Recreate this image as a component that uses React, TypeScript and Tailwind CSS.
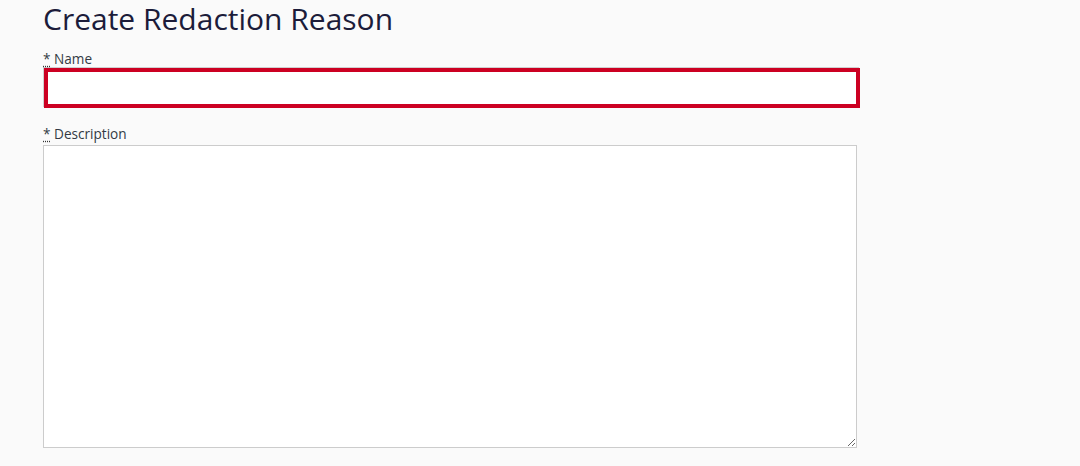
import React from "react";

export default function App() {
  return (
    <div className="min-h-[466px] w-full bg-[#fafafa] pl-[43px]" style={{ fontFamily: '"Open Sans", sans-serif' }}>
      <h1 className="pt-0 text-[30px] leading-[38px] font-normal text-[#1c1c3a]">Create Redaction Reason</h1>
      <div className="mt-[11px] w-[814px]">
        <label className="block text-[13.6px] leading-[20px] text-[#333a44]">
          <abbr title="required" className="underline decoration-dotted decoration-[#333] underline-offset-2">*</abbr> Name
        </label>
        <input
          type="text"
          className="mt-[-1px] ml-px box-border block h-[40px] w-[816px] border-4 border-[#cc0022] bg-white shadow-[-1px_-1px_0_#cfcfcf] outline-none"
        />
      </div>
      <div className="mt-[16px] w-[814px]">
        <label className="block text-[13.6px] leading-[20px] text-[#333a44]">
          <abbr title="required" className="underline decoration-dotted decoration-[#333] underline-offset-2">*</abbr> Description
        </label>
        <textarea className="mt-px box-border block h-[303px] w-[814px] border border-[#cccccc] bg-white outline-none" />
      </div>
    </div>
  );
}
